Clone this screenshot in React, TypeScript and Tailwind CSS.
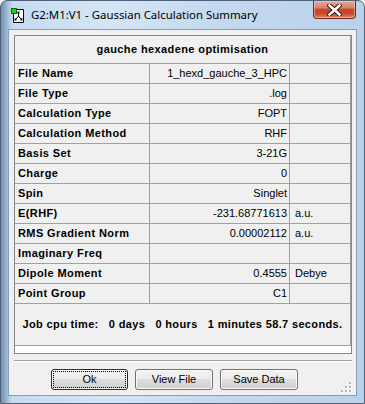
import React from 'react';

const rows: [string, string, string][] = [
  ['File Name', '1_hexd_gauche_3_HPC', ''],
  ['File Type', '.log', ''],
  ['Calculation Type', 'FOPT', ''],
  ['Calculation Method', 'RHF', ''],
  ['Basis Set', '3-21G', ''],
  ['Charge', '0', ''],
  ['Spin', 'Singlet', ''],
  ['E(RHF)', '-231.68771613', 'a.u.'],
  ['RMS Gradient Norm', '0.00002112', 'a.u.'],
  ['Imaginary Freq', '', ''],
  ['Dipole Moment', '0.4555', 'Debye'],
  ['Point Group', 'C1', ''],
];

function AppIcon() {
  return (
    <svg width="15" height="15" viewBox="0 0 15 15">
      <path d="M2.5 1.5 H12.5 V14.5 H2.5 Z" fill="#fff" stroke="#000" />
      <path d="M7.5 8 V4.5 M7.5 8 L4.5 11.5 M7.5 8 L10.5 11.5" stroke="#000" strokeWidth="1" />
      <rect x="6.5" y="3.5" width="2" height="2" fill="#000" />
      <rect x="3.5" y="10.5" width="2" height="2" fill="#000" />
      <rect x="9.5" y="10.5" width="2" height="2" fill="#000" />
      <rect x="0.5" y="0.5" width="5" height="5" fill="#19d419" stroke="#0a6a0a" />
    </svg>
  );
}

function CloseGlyph() {
  return (
    <svg width="15" height="12" viewBox="0 0 15 12">
      <path d="M2.5 1.5 L12.5 10.5 M12.5 1.5 L2.5 10.5" stroke="#3b1c18" strokeWidth="4.6" strokeLinecap="square" />
      <path d="M2.5 1.5 L12.5 10.5 M12.5 1.5 L2.5 10.5" stroke="#ffffff" strokeWidth="2.5" strokeLinecap="square" />
    </svg>
  );
}

function Grip() {
  const dots = [
    [8, 0],
    [4, 4],
    [8, 4],
    [0, 8],
    [4, 8],
    [8, 8],
  ];
  return (
    <svg width="11" height="11" viewBox="0 0 11 11">
      {dots.map(([x, y], i) => (
        <g key={i}>
          <rect x={x + 1} y={y + 1} width="2" height="2" fill="#ffffff" />
          <rect x={x} y={y} width="2" height="2" fill="#b8b8b8" />
        </g>
      ))}
    </svg>
  );
}

function WinButton({ label, width, focused }: { label: string; width: string; focused?: boolean }) {
  return (
    <button
      className={`${width} relative h-[21px] rounded-[3px] border ${
        focused ? 'border-[#2c2c2c]' : 'border-[#707070]'
      } bg-[linear-gradient(#f2f2f2_0%,#ebebeb_50%,#dddddd_50%,#cfcfcf_100%)] text-[11px] text-black shadow-[inset_0_0_0_1px_#fbfbfb]`}
    >
      {focused && <span className="absolute inset-[1px] border border-dotted border-black" />}
      <span className="relative">{label}</span>
    </button>
  );
}

export default function App() {
  return (
    <div
      className="relative flex h-[404px] w-[365px] flex-col overflow-hidden rounded-t-[7px] border border-[#4e6177] bg-[linear-gradient(90deg,#6f8fb0_0%,#c6dbf1_3%,#d4e5f5_30%,#c4d9ef_60%,#b9d1ea_100%)] px-[7px] pb-[7px]"
      style={{ fontFamily: '"Liberation Sans", Arial, sans-serif' }}
    >
      {/* Title bar */}
      <div className="flex h-[28px] items-center pl-[3px]">
        <AppIcon />
        <span
          className="ml-[5px] text-[11.4px] text-black"
          style={{ fontFamily: '"Noto Sans", "Open Sans", sans-serif' }}
        >
          G2:M1:V1 - Gaussian Calculation Summary
        </span>
      </div>
      <div className="absolute right-[8px] top-0 flex h-[18px] w-[43px] items-center justify-center rounded-b-[4px] border border-t-0 border-[#6b2a21] bg-[linear-gradient(#eaa796_0%,#d8826f_40%,#c7442d_50%,#c8482f_75%,#e0846a_100%)] shadow-[inset_0_0_0_1px_rgba(255,220,210,0.5)]">
        <CloseGlyph />
      </div>

      {/* Client area */}
      <div className="relative flex flex-1 flex-col border border-[#8b9db2] bg-[#f0f0f0]">
        <div className="ml-[5px] mt-[5px] h-[319px] w-[338px] border border-[#828790] bg-white">
          <div className="w-[336px] border-r border-[#a0a0a0] bg-[#f0f0f0] text-[11px] text-black">
            <div className="flex h-[28px] items-center justify-center border-b border-[#a0a0a0] font-bold tracking-[0.4px]">
              gauche hexadene optimisation
            </div>
            {rows.map(([label, value, unit]) => (
              <div key={label} className="flex h-[20px] border-b border-[#a0a0a0]">
                <div className="flex w-[135px] items-center border-r border-[#a0a0a0] pl-[3px] font-bold tracking-[0.4px]">
                  {label}
                </div>
                <div className="flex w-[140px] items-center justify-end border-r border-[#a0a0a0] pr-[2px]">
                  {value}
                </div>
                <div className="flex flex-1 items-center pl-[5px]">{unit}</div>
              </div>
            ))}
            <div className="flex h-[42px] items-center justify-center whitespace-pre border-b border-[#a0a0a0] font-bold tracking-[0.35px]">
              {'Job cpu time:   0 days   0 hours   1 minutes 58.7 seconds.'}
            </div>
          </div>
        </div>

        <div className="ml-[5px] mt-[6px] h-[2px] w-[338px] border-b border-t border-b-white border-t-[#a0a0a0]" />

        <div className="ml-[42px] mt-[7px] flex gap-[7px]">
          <WinButton label="Ok" width="w-[77px]" focused />
          <WinButton label="View File" width="w-[78px]" />
          <WinButton label="Save Data" width="w-[78px]" />
        </div>

        <div className="absolute bottom-[2px] right-[4px]">
          <Grip />
        </div>
      </div>
    </div>
  );
}
